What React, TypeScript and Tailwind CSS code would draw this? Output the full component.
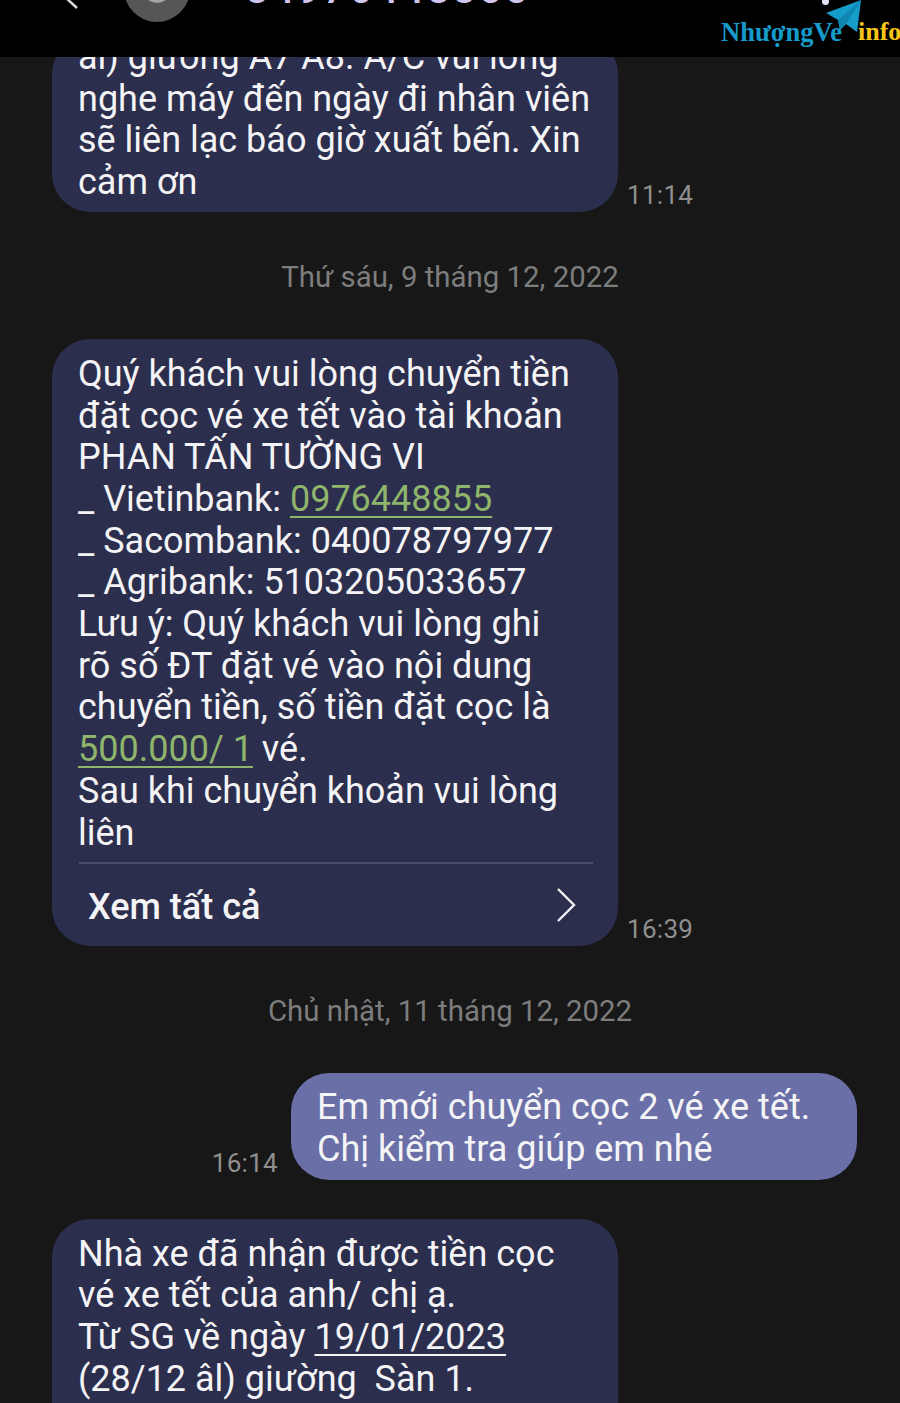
import React from "react";

const bodyFont = "font-['Roboto','Noto_Sans',sans-serif]";

const Time = ({ children }: { children: React.ReactNode }) => (
  <span className="text-[26px] leading-[30px] text-[#8f8f8f] tracking-[0.3px]">{children}</span>
);

const DateLabel = ({ children }: { children: React.ReactNode }) => (
  <div className="text-center text-[29.4px] leading-[34px] text-[#7d7d7d]">{children}</div>
);

const Link = ({ children }: { children: React.ReactNode }) => (
  <span className="text-[#8fb56c] underline underline-offset-[5px] decoration-2">{children}</span>
);

const Logo = () => (
  <div className="absolute right-0 top-0 h-[57px] w-[180px]">
    <span className="absolute left-[1px] top-[17px] font-['Liberation_Serif',serif] text-[26.5px] leading-[30px] font-bold text-[#159ccb]">
      NhượngVe
    </span>
    <span className="absolute left-[138px] top-[17px] font-['Liberation_Serif',serif] text-[26px] leading-[30px] font-bold text-[#f5c518]">
      info
    </span>
    {/* paper plane */}
    <svg className="absolute left-[105px] top-0" width="38" height="34" viewBox="0 0 38 34">
      <path d="M36 0 L1 13 L13 20 L15 30 L21 24 L32 32 Z" fill="#159ccb" />
      <path d="M36 0 L13 20 L15 30 L21 24 Z" fill="#0f86b0" />
    </svg>
  </div>
);

export default function App() {
  return (
    <div className={`relative flex h-[1403px] w-[900px] flex-col overflow-hidden bg-[#171717] text-[#f4f4f6] ${bodyFont}`}>
      {/* title bar, cut off by the top of the screenshot */}
      <header className="relative z-10 h-[57px] shrink-0 overflow-hidden bg-black">
        <svg className="absolute left-[60px] top-0" width="20" height="12" viewBox="0 0 20 12">
          <path d="M5 -3 L17 8" fill="none" stroke="#d8d8d8" strokeWidth="2.5" />
        </svg>
        <div className="absolute left-[124px] top-[-44px] flex h-[66px] w-[66px] items-center justify-center rounded-full bg-[#565656]">
          <div className="h-[28px] w-[28px] rounded-full bg-[#a5a5a5]" />
        </div>
        <div className="absolute left-[220px] top-[-31px] text-[41px] leading-[40px] font-medium tracking-[2.6px] text-[#cfc5ee]">
          +84976448855
        </div>
        <div className="absolute left-[822px] top-[-2px] h-[7px] w-[7px] rounded-full bg-[#e7dff5]" />
        <Logo />
      </header>

      <main className="flex flex-col text-[36px] leading-[41.7px]">
        {/* first bubble scrolls under the header */}
        <div className="mt-[-21px] flex items-end pl-[52px]">
          <div className="w-[566px] rounded-[38px] bg-[#2c2e4d] px-[26px] pb-[8px] pt-[1px]">
            <p>ai) giường A7 A8. A/C vui lòng</p>
            <p>nghe máy đến ngày đi nhân viên</p>
            <p>sẽ liên lạc báo giờ xuất bến. Xin</p>
            <p>cảm ơn</p>
          </div>
          <div className="ml-[9px] mb-[-2px]">
            <Time>11:14</Time>
          </div>
        </div>

        <div className="mt-[48px] mb-[45px]">
          <DateLabel>Thứ sáu, 9 tháng 12, 2022</DateLabel>
        </div>

        <div className="flex items-end pl-[52px]">
          <div className="w-[566px] rounded-[38px] bg-[#2c2e4d] pt-[15px]">
            <div className="px-[26px]">
              <p>Quý khách vui lòng chuyển tiền</p>
              <p>đặt cọc vé xe tết vào tài khoản</p>
              <p>PHAN TẤN TƯỜNG VI</p>
              <p>_ Vietinbank: <Link>0976448855</Link></p>
              <p>_ Sacombank: 040078797977</p>
              <p>_ Agribank: 5103205033657</p>
              <p>Lưu ý: Quý khách vui lòng ghi</p>
              <p>rõ số ĐT đặt vé vào nội dung</p>
              <p>chuyển tiền, số tiền đặt cọc là</p>
              <p><Link>500.000/ 1</Link> vé.</p>
              <p>Sau khi chuyển khoản vui lòng</p>
              <p>liên</p>
            </div>
            <div className="ml-[27px] mr-[25px] mt-[8px] h-[2px] bg-[#4a4c6b]" />
            <div className="flex h-[82px] items-center justify-between pl-[36px] pr-[42px]">
              <span className="mt-[5px] font-medium">Xem tất cả</span>
              <svg width="20" height="34" viewBox="0 0 20 34">
                <path d="M2 1 L18 17 L2 33" fill="none" stroke="#f4f4f6" strokeWidth="2.4" />
              </svg>
            </div>
          </div>
          <div className="ml-[9px] mb-[-1px]">
            <Time>16:39</Time>
          </div>
        </div>

        <div className="mt-[48px] mb-[45px]">
          <DateLabel>Chủ nhật, 11 tháng 12, 2022</DateLabel>
        </div>

        <div className="flex items-end justify-end pr-[43px]">
          <div className="mr-[13px] mb-[-2px]">
            <Time>16:14</Time>
          </div>
          <div className="w-[566px] rounded-[38px] bg-[#6a6fa7] px-[26px] pb-[9px] pt-[14px]">
            <p>Em mới chuyển cọc 2 vé xe tết.</p>
            <p>Chị kiểm tra giúp em nhé</p>
          </div>
        </div>

        <div className="mt-[39px] flex pl-[52px]">
          <div className="w-[566px] rounded-[38px] bg-[#2c2e4d] px-[26px] pb-[40px] pt-[15px]">
            <p>Nhà xe đã nhận được tiền cọc</p>
            <p>vé xe tết của anh/ chị ạ.</p>
            <p>Từ SG về ngày <span className="underline underline-offset-[5px] decoration-2">19/01/2023</span></p>
            <p>(28/12 âl) giường&nbsp; Sàn 1.</p>
          </div>
        </div>
      </main>
    </div>
  );
}
